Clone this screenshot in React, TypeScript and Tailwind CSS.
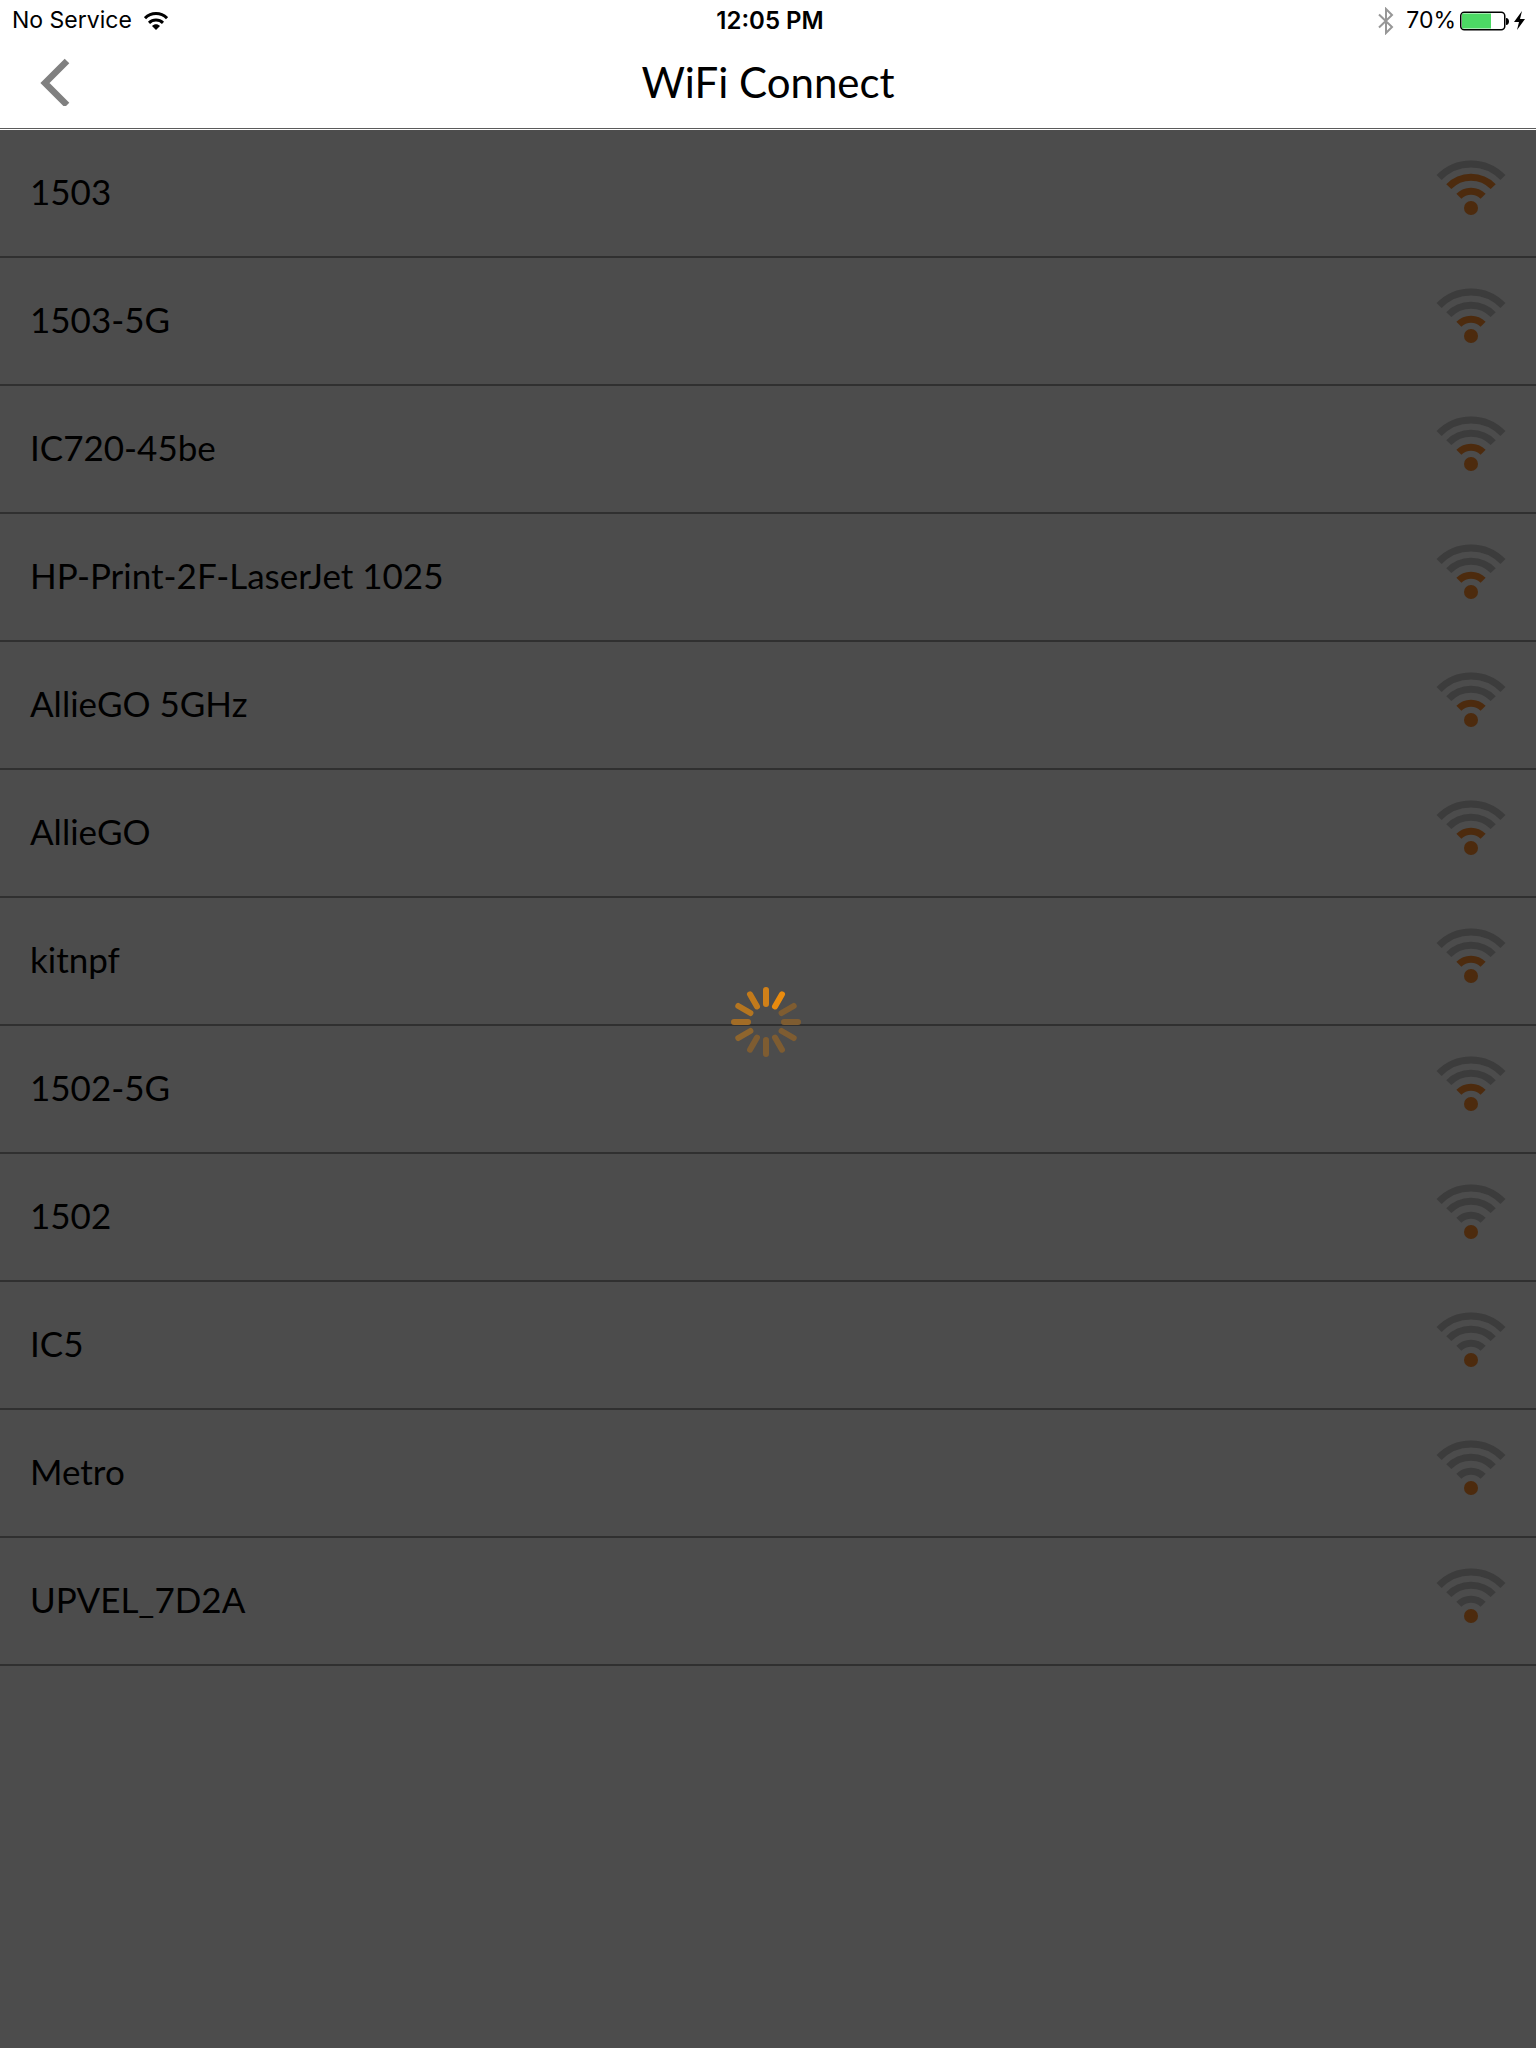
const networks = [
  { name: '1503', level: 3 },
  { name: '1503-5G', level: 2 },
  { name: 'IC720-45be', level: 2 },
  { name: 'HP-Print-2F-LaserJet 1025', level: 2 },
  { name: 'AllieGO 5GHz', level: 2 },
  { name: 'AllieGO', level: 2 },
  { name: 'kitnpf', level: 2 },
  { name: '1502-5G', level: 2 },
  { name: '1502', level: 1 },
  { name: 'IC5', level: 1 },
  { name: 'Metro', level: 1 },
  { name: 'UPVEL_7D2A', level: 1 },
];

const spokes = [
  '#d08018', '#e98b0e', '#7e5c31', '#7e5c31', '#7e5c31', '#7e5c31',
  '#7e5c31', '#7e5c31', '#8e652d', '#a26c26', '#b47520', '#c27a1b',
];

function Signal({ level }: { level: number }) {
  const color = (n: number) => (level >= n ? '#4d2b0e' : '#3c3c3c');
  return (
    <svg className="h-14 w-[70px] shrink-0" viewBox="0 0 70 56" fill="none" strokeWidth="7" role="img" aria-label={`Signal ${level} of 4`}>
      <path d="M3.1 17.5A44.2 44.2 0 0 1 66.9 17.5" stroke={color(4)} />
      <path d="M12.8 26.6A30.8 30.8 0 0 1 57.2 26.6" stroke={color(3)} />
      <path d="M22.9 36.3A16.9 16.9 0 0 1 47.1 36.3" stroke={color(2)} />
      <circle cx="35" cy="48" r="7" fill={color(1)} />
    </svg>
  );
}

function Spinner() {
  return (
    <svg className="size-[70px]" viewBox="-35 -35 70 70" role="img" aria-label="Loading">
      {spokes.map((c, i) => (
        <line key={i} x1="0" y1="-32" x2="0" y2="-18" stroke={c} strokeWidth="6" strokeLinecap="round" transform={`rotate(${i * 30})`} />
      ))}
    </svg>
  );
}

export default function App() {
  return (
    <div className="relative flex min-h-screen flex-col bg-[#4c4c4c] font-['Lato','Noto_Sans',sans-serif] text-black">
      <header className="border-b border-white bg-white">
        <div className="border-b border-[#5a5a5a]">
          <div className="grid h-10 grid-cols-[1fr_auto_1fr] items-center px-3 pt-px font-['Inter','Roboto',sans-serif] text-[23px]">
            <div className="flex items-center gap-3">
              <span>No Service</span>
              <svg className="h-[18px] w-6" viewBox="0 0 24 18" fill="none" stroke="#000" strokeWidth="3" aria-hidden="true">
                <path d="M1 6.2C7.2 0 16.8 0 23 6.2" />
                <path d="M5 10.8C9 7 15 7 19 10.8" />
                <path d="M8 14C10.300 11.800 13.700 11.800 16 14L12 18Z" fill="#000" stroke="none" />
              </svg>
            </div>
            <span className="pl-1 text-2xl font-semibold">12:05 PM</span>
            <div className="-mr-1 flex items-center justify-end">
              <svg className="h-7 w-4" viewBox="0 0 16 28" fill="none" stroke="#979797" strokeWidth="2" aria-hidden="true">
                <path d="M1 7.5L14 20L8 26V2L14 8L1 20.5" />
              </svg>
              <span className="ml-3">70%</span>
              <svg className="ml-1 h-5 w-[68px]" viewBox="0 0 68 20" aria-hidden="true">
                <rect x="0.750" y="1.250" width="44" height="17.500" rx="3.500" fill="#fff" stroke="#000" strokeWidth="1.500" />
                <rect x="2" y="2.500" width="29" height="15" fill="#4cd964" />
                <path d="M46 7C50 7 50 14 46 14Z" />
                <path d="M62 0L54 11H59L57 19L65 8H60Z" />
              </svg>
            </div>
          </div>
          <div className="grid h-[88px] grid-cols-[1fr_auto_1fr] items-center px-8">
            <button type="button" aria-label="Back" className="mb-1 size-12">
              <svg className="size-12" viewBox="0 0 48 48" fill="none" stroke="#808080" strokeWidth="6.500">
                <path d="M35 3L13 25L35 47" />
              </svg>
            </button>
            <h1 className="pb-1 text-[42px]">WiFi Connect</h1>
          </div>
        </div>
      </header>
      <ul>
        {networks.map((n) => (
          <li key={n.name} className="border-b-2 border-[#303030]">
            <button type="button" className="flex h-[126px] w-full items-center justify-between px-[30px] text-left">
              <span className="pb-1 text-[35px]">{n.name}</span>
              <span className="pb-[10px]"><Signal level={n.level} /></span>
            </button>
          </li>
        ))}
      </ul>
      <div className="absolute inset-0 flex items-center justify-center pr-1 pb-1">
        <Spinner />
      </div>
    </div>
  );
}
